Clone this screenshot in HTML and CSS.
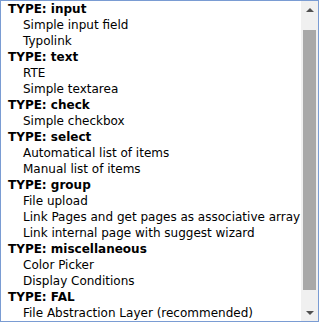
FILE: index.html
```html
<!DOCTYPE html>
<html lang="en">
<head>
  <meta charset="UTF-8">
  <title>Field types</title>
  <link rel="stylesheet" href="styles.css">
</head>
<body>
  <div class="listbox">
    <div class="listbox--items">
      <div class="listbox--group">TYPE: input</div>
      <div class="listbox--option">Simple input field</div>
      <div class="listbox--option">Typolink</div>
      <div class="listbox--group">TYPE: text</div>
      <div class="listbox--option">RTE</div>
      <div class="listbox--option">Simple textarea</div>
      <div class="listbox--group">TYPE: check</div>
      <div class="listbox--option">Simple checkbox</div>
      <div class="listbox--group">TYPE: select</div>
      <div class="listbox--option">Automatical list of items</div>
      <div class="listbox--option">Manual list of items</div>
      <div class="listbox--group">TYPE: group</div>
      <div class="listbox--option">File upload</div>
      <div class="listbox--option">Link Pages and get pages as associative array</div>
      <div class="listbox--option">Link internal page with suggest wizard</div>
      <div class="listbox--group">TYPE: miscellaneous</div>
      <div class="listbox--option">Color Picker</div>
      <div class="listbox--option">Display Conditions</div>
      <div class="listbox--group">TYPE: FAL</div>
      <div class="listbox--option">File Abstraction Layer (recommended)</div>
    </div>
    <div class="scroll">
      <div class="scroll--btn"><span class="scroll--up"></span></div>
      <div class="scroll--track"><div class="scroll--thumb"></div></div>
      <div class="scroll--btn"><span class="scroll--down"></span></div>
    </div>
  </div>
</body>
</html>
```

FILE: styles.css
```css
html,body{margin: 0; padding: 0; background-color: #fff;}
*{box-sizing: border-box;}

.listbox {
  display: flex;
  width: 319px;
  height: 322px;
  border: solid 1px #7a9cd3;
  font-family: "DejaVu Sans", Verdana, sans-serif;
  font-size: 12px;
  color: #000;
  overflow: hidden;
}
.listbox--items {
  flex: 1;
  min-width: 0;
  overflow: hidden;
}
.listbox--group,
.listbox--option {
  height: 16px;
  line-height: 16px;
  white-space: nowrap;
}
.listbox--group {
  padding-left: 7px;
  font-weight: bold;
}
.listbox--option {
  padding-left: 22px;
}

.scroll {
  width: 17px;
  display: flex;
  flex-direction: column;
  background-color: #f0f0f0;
}
.scroll--btn {
  height: 17px;
  display: flex;
  justify-content: center;
  align-items: center;
}
.scroll--up,
.scroll--down {
  width: 0;
  height: 0;
  border-left: 4px solid transparent;
  border-right: 4px solid transparent;
}
.scroll--up {border-bottom: 4px solid #505050;}
.scroll--down {border-top: 4px solid #505050;}
.scroll--track {
  flex: 1;
  padding: 12px 2px 0;
}
.scroll--thumb {
  height: 260px;
  background-color: #a8a8a8;
}
```
